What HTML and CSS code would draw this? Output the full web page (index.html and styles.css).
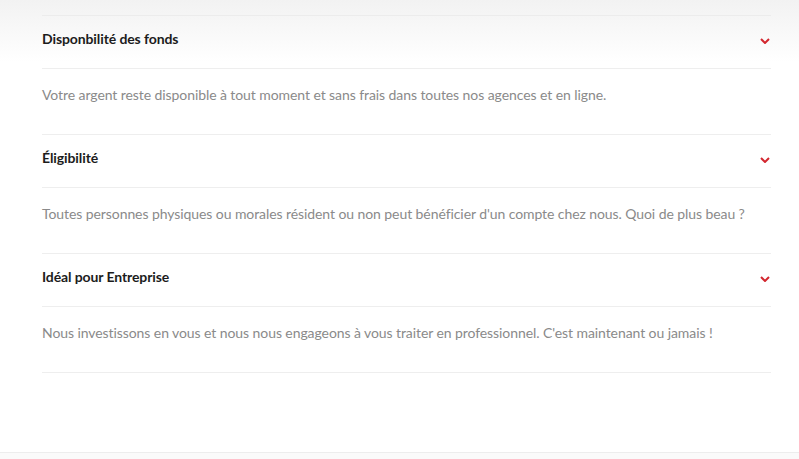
FILE: index.html
```html
<!DOCTYPE html>
<html lang="fr">
<head>
<meta charset="utf-8">
<link rel="stylesheet" href="styles.css">
</head>
<body>
<section class="faq">
  <div class="faq-inner">
    <div class="item">
      <div class="item-head">
        <h3 class="item-title">Disponbilité des fonds</h3>
        <svg class="chev" width="10" height="6" viewBox="0 0 10 6"><path d="M1 1 L5 5 L9 1" fill="none" stroke="#d3272f" stroke-width="2"/></svg>
      </div>
      <div class="item-body">Votre argent reste disponible à tout moment et sans frais dans toutes nos agences et en ligne.</div>
    </div>
    <div class="item">
      <div class="item-head">
        <h3 class="item-title">Éligibilité</h3>
        <svg class="chev" width="10" height="6" viewBox="0 0 10 6"><path d="M1 1 L5 5 L9 1" fill="none" stroke="#d3272f" stroke-width="2"/></svg>
      </div>
      <div class="item-body">Toutes personnes physiques ou morales résident ou non peut bénéficier d'un compte chez nous. Quoi de plus beau ?</div>
    </div>
    <div class="item">
      <div class="item-head">
        <h3 class="item-title">Idéal pour Entreprise</h3>
        <svg class="chev" width="10" height="6" viewBox="0 0 10 6"><path d="M1 1 L5 5 L9 1" fill="none" stroke="#d3272f" stroke-width="2"/></svg>
      </div>
      <div class="item-body">Nous investissons en vous et nous nous engageons à vous traiter en professionnel. C'est maintenant ou jamais !</div>
    </div>
  </div>
</section>
<footer class="foot"></footer>
</body>
</html>
```
FILE: styles.css
```css
html, body {
  margin: 0;
  padding: 0;
}
body {
  font-family: "Lato", "Open Sans", sans-serif;
  background: #fafafa;
  width: 799px;
  height: 459px;
  overflow: hidden;
}
.faq {
  background: linear-gradient(to bottom, #f2f2f2 0px, #ffffff 62px, #ffffff 100%);
  padding: 15px 28px 79px 42px;
  border-bottom: 1px solid #ededed;
}
.faq-inner {
  border-top: 1px solid #ececec;
}
.item {
  border-bottom: 1px solid #eeeeee;
}
.item-head {
  display: flex;
  align-items: flex-start;
  justify-content: space-between;
  height: 53px;
  box-sizing: border-box;
  padding-top: 13px;
  border-bottom: 1px solid #eeeeee;
}
.item-title {
  margin: 0;
  font-size: 14px;
  line-height: 20px;
  font-weight: 700;
  color: #1c1c1c;
  letter-spacing: -0.1px;
}
.chev {
  margin-right: 1px;
  margin-top: 9px;
}
.item-body {
  height: 65px;
  box-sizing: border-box;
  padding-top: 16px;
  font-size: 14px;
  line-height: 20px;
  color: #8a8a8a;
  letter-spacing: -0.08px;
}
```
